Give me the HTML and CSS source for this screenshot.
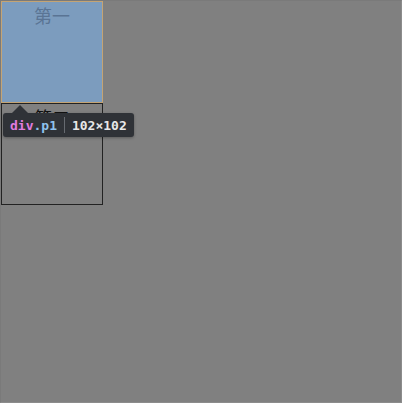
FILE: index.html
```html
<!DOCTYPE html>
<html>
<head>
<meta charset="utf-8">
<link rel="stylesheet" href="styles.css">
</head>
<body>
<div class="page">
  <div class="box p1">第一</div>
  <div class="box p2">第二</div>
  <div class="tip">
    <span class="tag">div</span><span class="cls">.p1</span><span class="sep"></span><span class="dim">102×102</span>
  </div>
</div>
</body>
</html>
```
FILE: styles.css
```css
html, body {
  margin: 0;
  padding: 0;
}
body {
  width: 402px;
  height: 403px;
  overflow: hidden;
}
.page {
  position: relative;
  box-sizing: border-box;
  width: 402px;
  height: 403px;
  background: #808080;
  border: 1px solid #8c8c8c;
  border-top-color: #7a7a7a;
  border-left-color: #7a7a7a;
}
.box {
  position: relative;
  width: 100px;
  height: 100px;
  border: 1px solid #222;
  text-align: center;
  font-family: "Noto Sans CJK SC", "Noto Sans", sans-serif;
  font-size: 18px;
  line-height: 26px;
  color: #111;
}
.p1 {
  background: #7c9cbe;
  border-color: #c4a474;
  color: #5a7494;
}
.tip {
  position: absolute;
  left: 2px;
  top: 112px;
  height: 24px;
  padding: 0 7px 0 7px;
  background: #2f3237;
  border-radius: 3px;
  display: flex;
  align-items: center;
  font-family: "DejaVu Sans Mono", monospace;
  font-weight: bold;
  font-size: 13px;
  color: #e8e8e8;
  box-shadow: 0 1px 3px rgba(0,0,0,0.3);
}
.tip::before {
  content: "";
  position: absolute;
  left: 9px;
  top: -8px;
  border-left: 8px solid transparent;
  border-right: 8px solid transparent;
  border-bottom: 8px solid #2f3237;
}
.tag {
  color: #e07ce0;
}
.cls {
  color: #8fc3ee;
}
.sep {
  width: 1px;
  height: 16px;
  background: #666a70;
  margin: 0 7px;
}
.dim {
  color: #e8e8e8;
}
```
